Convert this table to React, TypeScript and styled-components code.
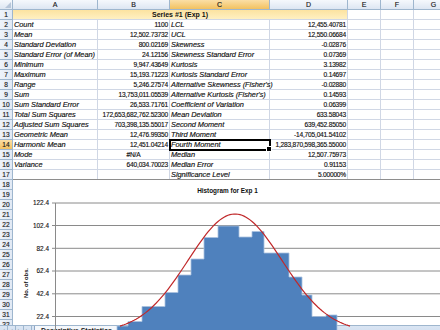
import styled, { createGlobalStyle } from 'styled-components'

const GlobalStyle = createGlobalStyle`
  html, body { margin: 0; padding: 0; background: #fff; overflow: hidden; }
  body { font-family: "Liberation Sans", Arial, sans-serif; color: #111; }
`

const Page = styled.div`
  position: relative;
  width: 440px;
  height: 330px;
  overflow: hidden;
`

const Sheet = styled.div`
  display: grid;
  grid-template-columns: 13px 85px 72px 100px 78px 33px 33px 40px;
  grid-auto-rows: 10px;
  height: 325px;
  overflow: hidden;
`

const Corner = styled.div`
  position: relative;
  background: linear-gradient(#f5f8fc, #dde6f2);
  border-right: 1px solid #9eb6ce;
  border-bottom: 1px solid #9eb6ce;
  &::after {
    content: '';
    position: absolute;
    right: 1px;
    bottom: 1px;
    border-left: 6px solid transparent;
    border-bottom: 6px solid #b7c6d9;
  }
`

const ColHead = styled.div<{ $active?: boolean }>`
  background: ${p => (p.$active ? 'linear-gradient(#fbdfa6, #f2c160)' : 'linear-gradient(#f5f8fc, #dde6f2)')};
  border-right: 1px solid #9eb6ce;
  border-bottom: 1px solid #9eb6ce;
  font-size: 7px;
  line-height: 9px;
  text-align: center;
  color: #1a1a1a;
  -webkit-text-stroke: 0.15px #1a1a1a;
`

const RowHead = styled.div<{ $active?: boolean }>`
  background: ${p => (p.$active ? 'linear-gradient(#fbdfa6, #f2c160)' : 'linear-gradient(90deg, #eef3fa, #e1e9f4)')};
  border-right: 1px solid #9eb6ce;
  border-bottom: 1px solid #9eb6ce;
  font-size: 6.6px;
  line-height: 9px;
  text-align: center;
  color: #1a1a1a;
  -webkit-text-stroke: 0.15px #1a1a1a;
`

const Cell = styled.div<{ $align?: 'left' | 'right' | 'center'; $label?: boolean; $selected?: boolean }>`
  position: relative;
  border-right: 1px solid #d0d7e5;
  border-bottom: 1px solid #d0d7e5;
  font-size: ${p => (p.$label ? '7.4px' : '6.6px')};
  font-style: ${p => (p.$label ? 'italic' : 'normal')};
  letter-spacing: ${p => (p.$label ? '-0.05px' : '-0.2px')};
  line-height: 9px;
  white-space: nowrap;
  text-align: ${p => p.$align || 'left'};
  padding: 0 1px;
  color: #111;
  -webkit-text-stroke: 0.15px #111;
  ${p =>
    p.$selected &&
    `
    outline: 2px solid #000;
    outline-offset: -1px;
    z-index: 1;
    &::after {
      content: '';
      position: absolute;
      right: -3px;
      bottom: -3px;
      width: 4px;
      height: 4px;
      background: #000;
      border: 1px solid #fff;
    }
  `}
`

const TitleCell = styled.div`
  grid-column: span 4;
  background: linear-gradient(#fce3a0, #fff0c2);
  border-right: 1px solid #d0d7e5;
  border-bottom: 1px solid #d0d7e5;
  font-size: 7px;
  font-weight: bold;
  line-height: 9px;
  text-align: center;
  color: #111;
`

const ChartBox = styled.div`
  position: absolute;
  left: 13px;
  top: 180px;
  width: 427px;
  height: 145px;
  background: #fff;
  z-index: 2;
`

const ChartSvg = styled.svg`
  display: block;
  overflow: visible;
`

const ChartTitle = styled.text`
  font-family: "Liberation Sans", Arial, sans-serif;
  font-size: 6.4px;
  font-weight: bold;
  fill: #111;
`

const AxisLabel = styled.text`
  font-family: "Liberation Sans", Arial, sans-serif;
  font-size: 6.4px;
  fill: #111;
  stroke: #111;
  stroke-width: 0.12px;
`

const AxisTitle = styled.text`
  font-family: "Liberation Sans", Arial, sans-serif;
  font-size: 5.8px;
  font-weight: bold;
  fill: #111;
`

const TabBar = styled.div`
  display: flex;
  align-items: flex-start;
  height: 16px;
  background: linear-gradient(#dae5f3, #c6d6ec);
  border-top: 1px solid #9eb6ce;
`

const NavGroup = styled.div`
  display: flex;
  width: 32px;
`

const NavButton = styled.div`
  width: 7px;
  height: 10px;
  border-right: 1px solid #9eb6ce;
  font-size: 5px;
  line-height: 8px;
  text-align: center;
  color: #333;
`

const SheetTab = styled.div`
  margin-left: 2px;
  padding: 1px 6px 0;
  background: #f4f7fb;
  border-left: 1px solid #8ea6c5;
  border-right: 1px solid #8ea6c5;
  font-size: 7px;
  font-weight: bold;
  line-height: 8px;
  color: #222;
`

const NewTab = styled.div`
  margin: 1px 0 0 4px;
  width: 7px;
  height: 7px;
  background: linear-gradient(#f8c67a, #e89b3c);
  border: 1px solid #c9a36a;
`

const rows: [string, string, string, string][] = [
  ['Count', '1100', 'LCL', '12,455.40781'],
  ['Mean', '12,502.73732', 'UCL', '12,550.06684'],
  ['Standard Deviation', '800.02169', 'Skewness', '-0.02876'],
  ['Standard Error (of Mean)', '24.12156', 'Skewness Standard Error', '0.07369'],
  ['Minimum', '9,947.43649', 'Kurtosis', '3.13982'],
  ['Maximum', '15,193.71223', 'Kurtosis Standard Error', '0.14697'],
  ['Range', '5,246.27574', "Alternative Skewness (Fisher's)", '-0.02880'],
  ['Sum', '13,753,011.05539', "Alternative Kurtosis (Fisher's)", '0.14593'],
  ['Sum Standard Error', '26,533.71761', 'Coefficient of Variation', '0.06399'],
  ['Total Sum Squares', '172,653,682,762.52300', 'Mean Deviation', '633.58043'],
  ['Adjusted Sum Squares', '703,398,135.55017', 'Second Moment', '639,452.85050'],
  ['Geometric Mean', '12,476.99350', 'Third Moment', '-14,705,041.54102'],
  ['Harmonic Mean', '12,451.04214', 'Fourth Moment', '1,283,870,598,365.55000'],
  ['Mode', '#N/A', 'Median', '12,507.75973'],
  ['Variance', '640,034.70023', 'Median Error', '0.91153'],
  ['', '', 'Significance Level', '5.00000%'],
]

const columns = ['A', 'B', 'C', 'D', 'E', 'F', 'G']

const gridLines = [
  { v: '122.4', y: 203 },
  { v: '102.4', y: 225.5 },
  { v: '82.4', y: 248.3 },
  { v: '62.4', y: 271 },
  { v: '42.4', y: 293.8 },
  { v: '22.4', y: 316.5 },
]

// [x start, x end, top]
const bars: [number, number, number][] = [
  [117, 128, 326],
  [128, 142, 321.5],
  [142, 165, 306.5],
  [165, 178, 292.5],
  [178, 191, 275],
  [191, 204, 259],
  [204, 218, 237.5],
  [218, 239, 226],
  [239, 252, 237],
  [252, 264, 231.5],
  [264, 289, 253],
  [289, 302, 277],
  [302, 312, 295],
  [312, 326, 316.5],
  [326, 337, 315],
]

function Histogram() {
  const base = 331
  let barPath = `M${bars[0][0]},${base}`
  bars.forEach(([x0, x1, top]) => {
    barPath += ` L${x0},${top} L${x1},${top}`
  })
  barPath += ` L${bars[bars.length - 1][1]},${base} Z`

  const pts: string[] = []
  for (let x = 120; x <= 350; x += 2) {
    const y = 332 - 118 * Math.exp(-((x - 235) ** 2) / (2 * 47 * 47))
    pts.push(`${x},${y.toFixed(2)}`)
  }

  return (
    <ChartBox>
      <ChartSvg viewBox="13 180 427 151" width={427} height={151}>
        <line x1={13} y1={179.5} x2={440} y2={179.5} stroke="#8e8e8e" />
        <ChartTitle x={227.5} y={192.5} textAnchor="middle">Histogram for Exp 1</ChartTitle>
        {gridLines.map(g => (
          <g key={g.v}>
            <line x1={52} y1={g.y} x2={440} y2={g.y} stroke="#8a8a8a" strokeWidth={1} />
            <AxisLabel x={49} y={g.y + 2.2} textAnchor="end">{g.v}</AxisLabel>
          </g>
        ))}
        <line x1={55.5} y1={203} x2={55.5} y2={331} stroke="#8a8a8a" />
        <path d={barPath} fill="#4f81bd" stroke="#a9c1e0" strokeWidth={0.8} />
        <polyline points={pts.join(' ')} fill="none" stroke="#c0282a" strokeWidth={1.2} />
        <AxisTitle x={0} y={0} textAnchor="middle" transform="translate(27.5 283) rotate(-90)">
          No. of obs.
        </AxisTitle>
      </ChartSvg>
    </ChartBox>
  )
}

export default function App() {
  const extraRows = Array.from({ length: 15 }, (_, i) => i + 18)
  return (
    <>
      <GlobalStyle />
      <Page>
        <Sheet>
          <Corner />
          {columns.map(c => (
            <ColHead key={c} $active={c === 'C'}>{c}</ColHead>
          ))}

          <RowHead>1</RowHead>
          <TitleCell>Series #1 (Exp 1)</TitleCell>
          <Cell />
          <Cell />
          <Cell />

          {rows.map((r, i) => {
            const n = i + 2
            return [
              <RowHead key={`h${n}`} $active={n === 14}>{n}</RowHead>,
              <Cell key={`a${n}`} $label>{r[0]}</Cell>,
              <Cell key={`b${n}`} $align={r[1] === '#N/A' ? 'center' : 'right'}>{r[1]}</Cell>,
              <Cell key={`c${n}`} $label $selected={n === 14}>{r[2]}</Cell>,
              <Cell key={`d${n}`} $align="right">{r[3]}</Cell>,
              <Cell key={`e${n}`} />,
              <Cell key={`f${n}`} />,
              <Cell key={`g${n}`} />,
            ]
          })}

          {extraRows.map(n => [
            <RowHead key={`h${n}`}>{n}</RowHead>,
            ...Array.from({ length: 7 }, (_, j) => <Cell key={`c${n}-${j}`} />),
          ])}
        </Sheet>

        <Histogram />

        <TabBar>
          <NavGroup>
            <NavButton>◂</NavButton>
            <NavButton>◂</NavButton>
            <NavButton>▸</NavButton>
            <NavButton>▸</NavButton>
          </NavGroup>
          <SheetTab>Descriptive Statistics</SheetTab>
          <NewTab />
        </TabBar>
      </Page>
    </>
  )
}
